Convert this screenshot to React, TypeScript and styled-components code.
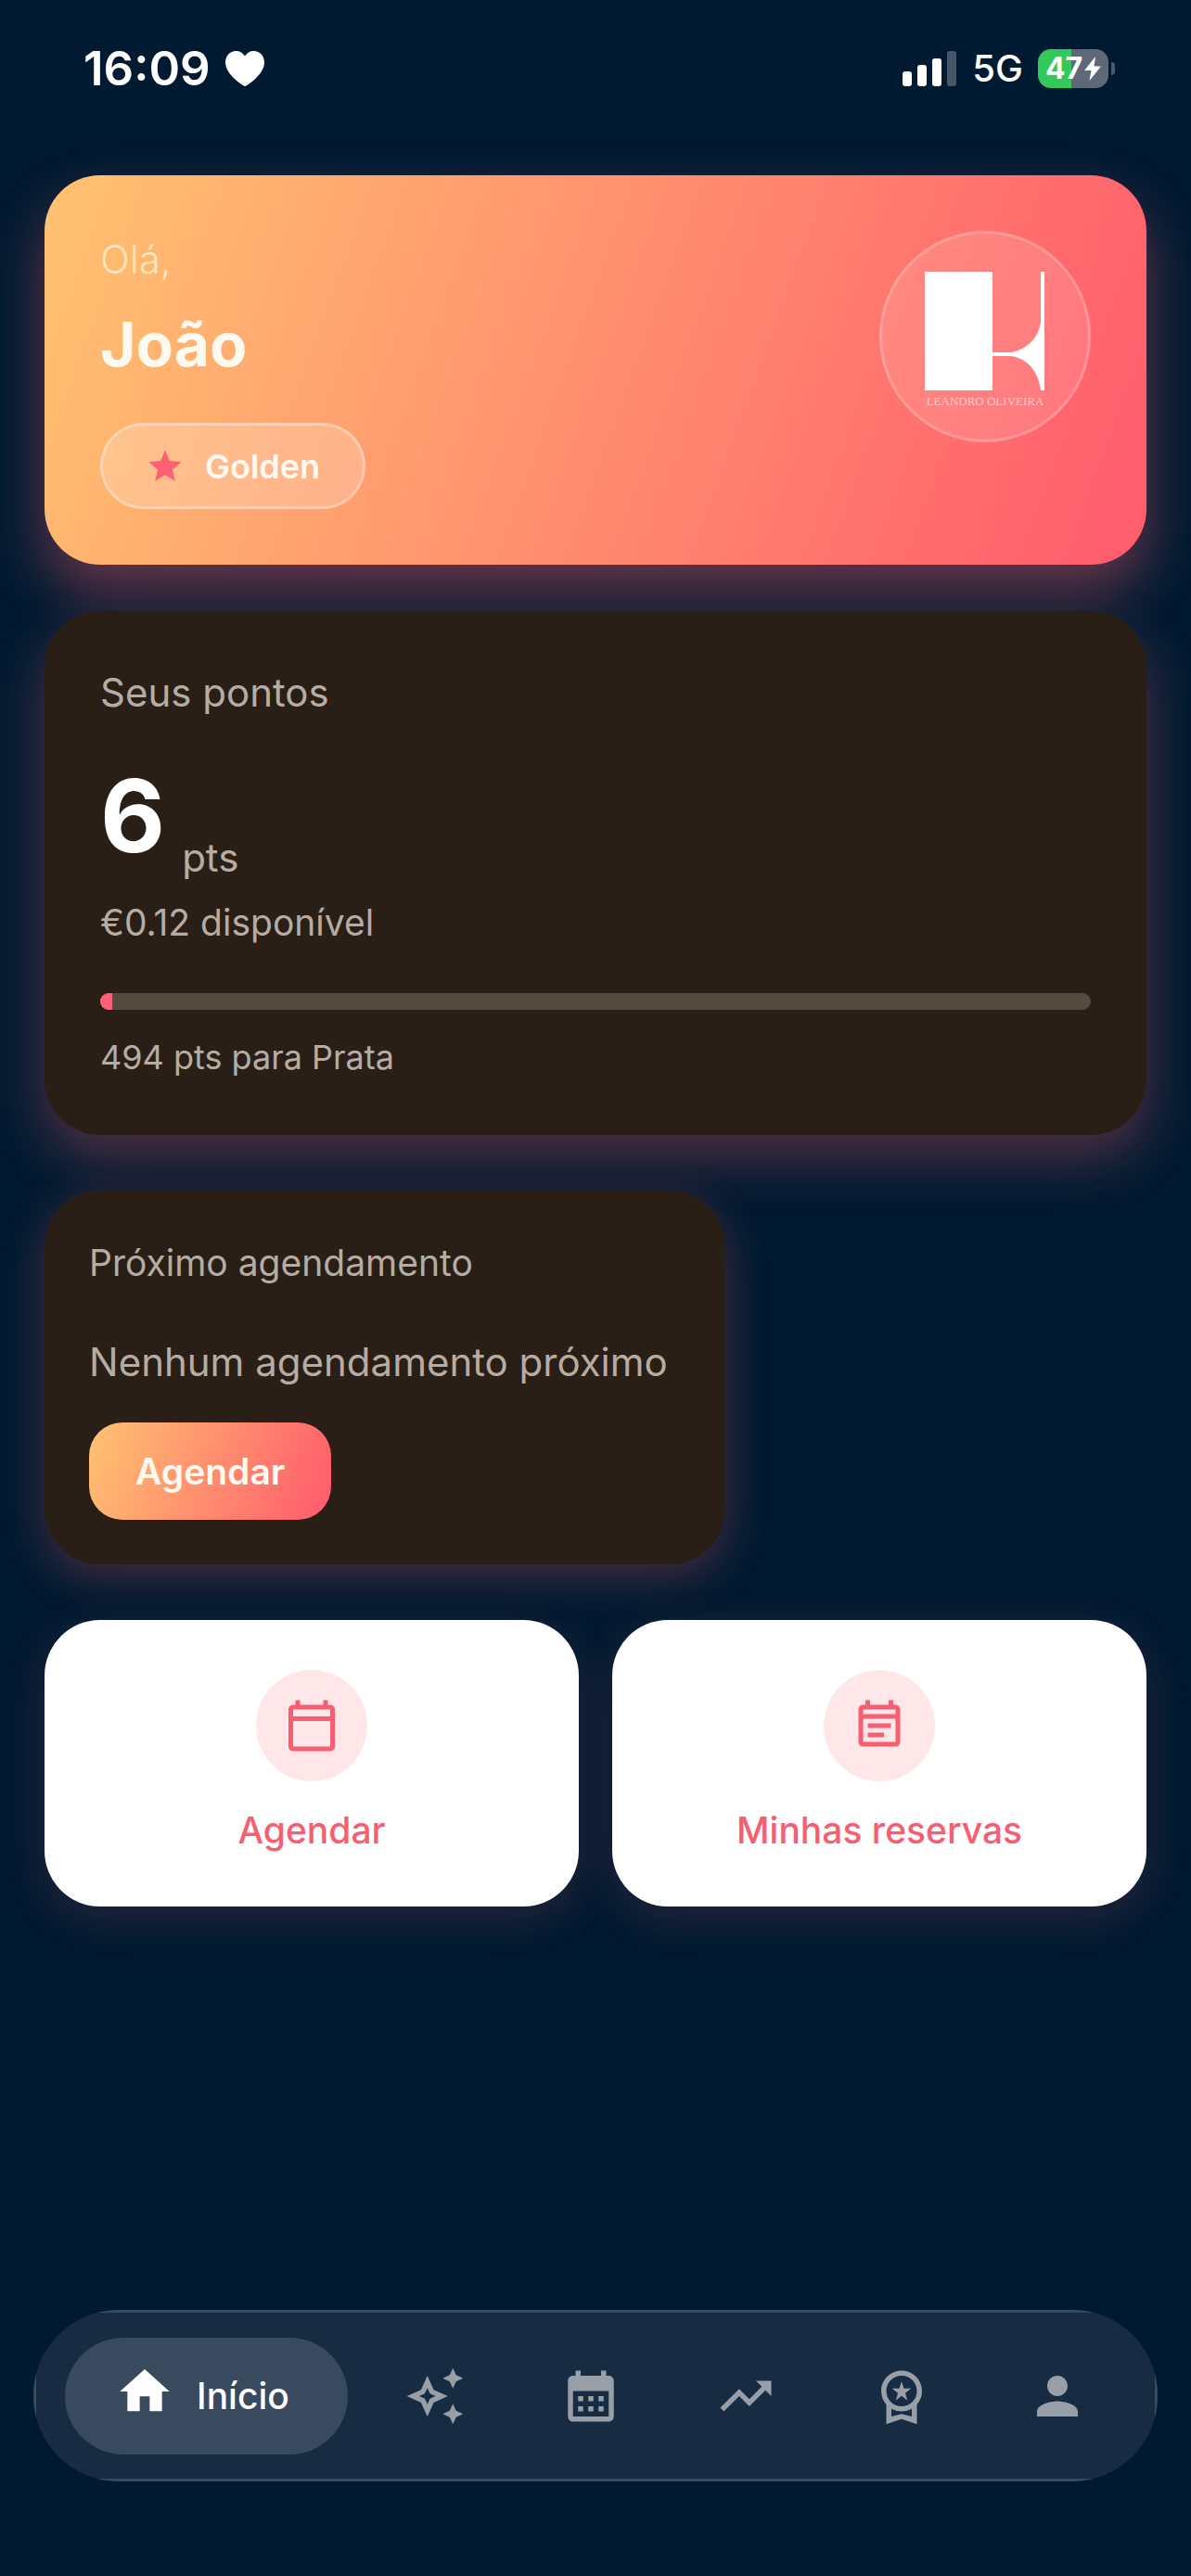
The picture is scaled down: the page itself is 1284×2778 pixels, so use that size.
import React from "react";
import styled, { createGlobalStyle } from "styled-components";
import {
  MdCalendarMonth,
  MdHome,
  MdOutlineAutoAwesome,
  MdOutlineCalendarToday,
  MdOutlineEventNote,
  MdOutlineWorkspacePremium,
  MdPerson,
  MdStar,
  MdTrendingUp,
} from "react-icons/md";

const color = {
  page: "#001a31",
  card: "#2a1f16",
  muted: "#b7aca3",
  accent: "#f55f71",
  cream: "#fffaf0",
  gradient: "linear-gradient(110deg, #ffc371 0%, #ff5f6d 95%)",
};

const GlobalStyle = createGlobalStyle`
  *, *::before, *::after { box-sizing: border-box; }
  body {
    margin: 0;
    background: ${color.page};
    color: #fff;
    font-family: Inter, Roboto, "Liberation Sans", sans-serif;
  }
  button { border: 0; margin: 0; font: inherit; cursor: pointer; }
  h1, p { margin: 0; font: inherit; }
  svg { display: block; flex: none; }
`;

const Screen = styled.div`
  display: flex;
  flex-direction: column;
  min-height: 100vh;
  overflow-x: hidden;
`;

/* ---------- status bar ---------- */

const StatusBar = styled.header`
  display: flex;
  align-items: center;
  justify-content: space-between;
  height: 147px;
  padding: 0 82px 0 90px;
`;

const StatusGroup = styled.div<{ $gap: number }>`
  display: flex;
  align-items: center;
  gap: ${(p) => p.$gap}px;
`;

const Clock = styled.span`
  font-size: 51px;
  line-height: 60px;
  font-weight: 600;
`;

const Network = styled.span`
  font-size: 40px;
  line-height: 48px;
  font-weight: 500;
`;

const Battery = styled.div`
  display: flex;
  align-items: center;
  gap: 3px;

  &::after {
    content: "";
    width: 4px;
    height: 14px;
    border-radius: 0 4px 4px 0;
    background: #4d5a6c;
  }
`;

const BatteryBody = styled.div`
  display: flex;
  align-items: center;
  justify-content: center;
  gap: 2px;
  width: 76px;
  height: 42px;
  border-radius: 14px;
  background: linear-gradient(90deg, #34c759 47%, #5d6878 47%);
  font-size: 32px;
  line-height: 42px;
  font-weight: 700;
`;

/* ---------- content ---------- */

const Content = styled.main`
  display: flex;
  flex-direction: column;
  gap: 60px;
  padding: 42px 48px 60px;
`;

const Summary = styled.div`
  display: flex;
  flex-direction: column;
  gap: 50px;
`;

const Hero = styled.section`
  display: flex;
  justify-content: space-between;
  align-items: flex-start;
  padding: 60px;
  border-radius: 60px;
  background: ${color.gradient};
  box-shadow: 0 30px 60px rgba(255, 95, 109, 0.4);
`;

const Greeting = styled.div`
  display: flex;
  flex-direction: column;
  align-items: flex-start;
`;

const Hello = styled.p`
  font-size: 42px;
  line-height: 62px;
  font-weight: 300;
  color: #ffe6ba;
`;

const Name = styled.h1`
  margin-top: 18px;
  font-size: 66px;
  line-height: 84px;
  font-weight: 700;
  color: ${color.cream};
`;

const Tier = styled.div`
  display: flex;
  align-items: center;
  gap: 22px;
  height: 93px;
  margin-top: 43px;
  padding: 0 46px;
  border: 3px solid rgba(255, 255, 255, 0.3);
  border-radius: 47px;
  background: rgba(255, 255, 255, 0.2);
  color: ${color.cream};
  font-size: 36px;
  line-height: 48px;
  font-weight: 600;
`;

const Brand = styled.div`
  display: flex;
  flex-direction: column;
  align-items: center;
  justify-content: center;
  gap: 4px;
  width: 228px;
  height: 228px;
  padding-top: 8px;
  border: 3px solid rgba(255, 255, 255, 0.2);
  border-radius: 50%;
  background: rgba(255, 255, 255, 0.13);
`;

const BrandName = styled.span`
  font-family: "Liberation Serif", serif;
  font-size: 13px;
  line-height: 16px;
  white-space: nowrap;
  color: rgba(255, 255, 255, 0.6);
`;

const Points = styled.section`
  padding: 60px;
  border-radius: 60px;
  background: ${color.card};
  box-shadow: 0 24px 60px rgba(255, 95, 109, 0.32);
`;

const Text = styled.p<{ $size: number; $line: number }>`
  font-size: ${(p) => p.$size}px;
  line-height: ${(p) => p.$line}px;
  color: ${color.muted};
`;

const Balance = styled.div`
  display: flex;
  align-items: flex-end;
  gap: 18px;
  margin: 32px 0 18px;
`;

const Amount = styled.strong`
  font-size: 108px;
  line-height: 146px;
  font-weight: 700;
`;

const Track = styled.div`
  height: 18px;
  margin: 52px 0 27px;
  border-radius: 9px;
  overflow: hidden;
  background: #554a40;
`;

const Fill = styled.div`
  height: 100%;
  background: #ff5f78;
`;

const Next = styled.section`
  align-self: flex-start;
  padding: 48px 62px 48px 48px;
  border-radius: 60px;
  background: ${color.card};
  box-shadow: 0 12px 48px rgba(255, 95, 109, 0.28);
`;

const BookButton = styled.button`
  height: 105px;
  margin-top: 35px;
  padding: 0 50px;
  border-radius: 36px;
  background: ${color.gradient};
  color: ${color.cream};
  font-size: 39px;
  line-height: 48px;
  font-weight: 600;
`;

const Empty = styled.div`
  margin-top: 47px;
`;

const Actions = styled.div`
  display: grid;
  grid-template-columns: 1fr 1fr;
  gap: 36px;
`;

const Action = styled.button`
  display: flex;
  flex-direction: column;
  align-items: center;
  gap: 24px;
  padding: 54px 24px;
  border-radius: 60px;
  background: #fff;
  box-shadow: 0 12px 48px rgba(255, 95, 109, 0.15);
  color: ${color.accent};
  font-size: 39px;
  line-height: 57px;
  font-weight: 500;
`;

const ActionIcon = styled.span`
  display: grid;
  place-items: center;
  width: 120px;
  height: 120px;
  border-radius: 50%;
  background: #ffe7e9;
`;

/* ---------- bottom navigation ---------- */

const NavShell = styled.div`
  margin: auto 36px 102px;
  border-radius: 92px;
  overflow: hidden;
`;

const Nav = styled.nav`
  display: flex;
  align-items: center;
  height: 185px;
  padding: 0 21px;
  border: 3px solid #384c60;
  background: #172b42;
`;

const Tab = styled.button`
  display: flex;
  flex: 1;
  align-items: center;
  justify-content: center;
  height: 126px;
  padding: 0;
  background: none;
  color: #989fa8;
`;

const ActiveTab = styled.button`
  display: flex;
  align-items: center;
  gap: 24px;
  min-width: 305px;
  height: 126px;
  margin: 0 10px;
  padding: 0 54px;
  border-radius: 63px;
  background: #3a4a5e;
  color: #fff;
  font-size: 39px;
  line-height: 48px;
  font-weight: 500;
`;

const Raised = styled.span`
  padding-bottom: 10px;
`;

const tabs = [
  { label: "Serviços", Icon: MdOutlineAutoAwesome },
  { label: "Calendário", Icon: MdCalendarMonth },
  { label: "Progresso", Icon: MdTrendingUp },
  { label: "Recompensas", Icon: MdOutlineWorkspacePremium },
  { label: "Perfil", Icon: MdPerson },
];

const points = 6;
const nextTier = 500;

function Heart() {
  return (
    <svg width="42" height="38" viewBox="0 0 42 38" fill="#fff" aria-hidden="true">
      <path d="M21 38C19 38 0 25 0 12.500C0 5 5 0 11.500 0C15.500 0 19 2 21 5.500C23 2 26.500 0 30.500 0C37 0 42 5 42 12.500C42 25 23 38 21 38Z" />
    </svg>
  );
}

function Signal() {
  return (
    <svg width="59" height="38" viewBox="0 0 59 38" fill="#fff" aria-hidden="true">
      <rect x="0" y="22" width="10" height="16" rx="3" />
      <rect x="16" y="15" width="10" height="23" rx="3" />
      <rect x="32" y="8" width="10" height="30" rx="3" />
      <rect x="48" y="0" width="10" height="38" rx="3" fillOpacity="0.27" />
    </svg>
  );
}

function Bolt() {
  return (
    <svg width="18" height="26" viewBox="0 0 18 26" fill="#fff" aria-hidden="true">
      <path d="M12 0L0 15H7.500L5.500 26L18 10.500H10.500Z" />
    </svg>
  );
}

function BrandMark() {
  return (
    <svg width="130" height="128" viewBox="0 0 130 128" fill="#fff" aria-hidden="true">
      <rect width="73" height="128" />
      <path d="M125 0H129V128H125C123 109 111 92 91 91H73V87H91C108 86 124 71 125 53Z" />
    </svg>
  );
}

export default function App() {
  return (
    <Screen>
      <GlobalStyle />
      <StatusBar>
        <StatusGroup $gap={16}>
          <Clock>16:09</Clock>
          <Heart />
        </StatusGroup>
        <StatusGroup $gap={16}>
          <Signal />
          <Network>5G</Network>
          <Battery>
            <BatteryBody>
              47
              <Bolt />
            </BatteryBody>
          </Battery>
        </StatusGroup>
      </StatusBar>

      <Content>
        <Summary>
          <Hero>
            <Greeting>
              <Hello>Olá,</Hello>
              <Name>João</Name>
              <Tier>
                <MdStar size={42} color="#ff5f73" />
                Golden
              </Tier>
            </Greeting>
            <Brand>
              <BrandMark />
              <BrandName>LEANDRO OLIVEIRA</BrandName>
            </Brand>
          </Hero>

          <Points>
            <Text $size={42} $line={56}>Seus pontos</Text>
            <Balance>
              <Amount>{points}</Amount>
              <Text $size={42} $line={56}>pts</Text>
            </Balance>
            <Text $size={39} $line={48}>€0.12 disponível</Text>
            <Track>
              <Fill style={{ width: `${(points / nextTier) * 100}%` }} />
            </Track>
            <Text $size={36} $line={48}>{nextTier - points} pts para Prata</Text>
          </Points>
        </Summary>

        <Next>
          <Text $size={39} $line={60}>Próximo agendamento</Text>
          <Empty>
            <Text $size={42} $line={60}>Nenhum agendamento próximo</Text>
          </Empty>
          <BookButton type="button">Agendar</BookButton>
        </Next>

        <Actions>
          <Action type="button">
            <ActionIcon>
              <MdOutlineCalendarToday size={60} />
            </ActionIcon>
            Agendar
          </Action>
          <Action type="button">
            <ActionIcon>
              <MdOutlineEventNote size={60} />
            </ActionIcon>
            Minhas reservas
          </Action>
        </Actions>
      </Content>

      <NavShell>
        <Nav>
          <ActiveTab type="button" aria-current="page">
            <Raised>
              <MdHome size={64} />
            </Raised>
            Início
          </ActiveTab>
          {tabs.map(({ label, Icon }) => (
            <Tab key={label} type="button" aria-label={label}>
              <Icon size={66} />
            </Tab>
          ))}
        </Nav>
      </NavShell>
    </Screen>
  );
}
